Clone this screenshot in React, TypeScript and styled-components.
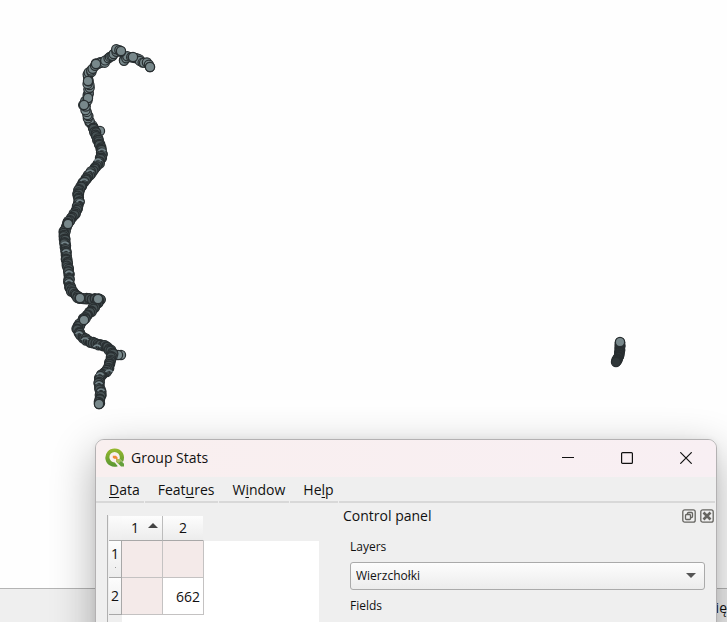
import React from 'react';
import styled, { createGlobalStyle } from 'styled-components';

const GlobalStyle = createGlobalStyle`
  * { box-sizing: border-box; }
  body { margin: 0; background: #fff; color: #111; font-family: "Open Sans", "Noto Sans", sans-serif; font-size: 14px; }
  button, select { font: inherit; color: inherit; }
`;

const Desktop = styled.main`
  position: relative;
  display: flex;
  flex-direction: column;
  height: 100vh;
  overflow: hidden;
`;

const MapCanvas = styled.section`
  flex: 1;
  min-height: 0;
  overflow: hidden;
  background: #fefefe;
  svg { display: block; }
`;

const StatusBar = styled.footer`
  display: flex;
  justify-content: flex-end;
  height: 34px;
  padding-top: 9px;
  border-top: 1px solid #b4b4b4;
  background: #efefef;
  line-height: 20px;
`;

const Dialog = styled.section`
  position: absolute;
  top: 439px;
  left: 95px;
  right: 10px;
  height: 340px;
  display: flex;
  flex-direction: column;
  overflow: hidden;
  border: 1px solid #b3b1b2;
  border-radius: 9px;
  background: #efefef;
  box-shadow: 0 14px 44px rgba(0, 0, 0, 0.32), 0 0 6px rgba(0, 0, 0, 0.06);
`;

const TitleBar = styled.header`
  display: flex;
  align-items: center;
  height: 37px;
  padding: 0 1px 1px 9px;
  background: linear-gradient(90deg, #f9efef, #f8eff3);
`;

const Title = styled.h1`
  flex: 1;
  margin: 0 0 0 6px;
  font-size: 14px;
  font-weight: 400;
  line-height: 20px;
`;

const CaptionButton = styled.button`
  display: grid;
  place-items: center;
  width: 59px;
  height: 36px;
  padding: 0;
  border: 0;
  background: none;
`;

const MenuBar = styled.nav`
  display: flex;
  gap: 1px;
  height: 26px;
  padding-right: 1px;
`;

const MenuButton = styled.button`
  padding: 1px 4px 0 13px;
  border: 0;
  border-bottom: 2px solid #d8d8d8;
  background: none;
  line-height: 20px;
  u { text-underline-offset: 2px; text-decoration-skip-ink: none; }
`;

const MenuRest = styled.div`
  flex: 1;
  border-bottom: 2px solid #d8d8d8;
`;

const Body = styled.div`
  display: flex;
  flex: 1;
  gap: 24px;
  min-height: 0;
`;

const ResultPane = styled.section`
  width: 212px;
  margin: 12px 0 0 11px;
  border-left: 1px solid #b0b0b0;
  padding-top: 1px;
  background: linear-gradient(#efefef 26px, transparent 26px), linear-gradient(90deg, #efefef 14px, #fff 14px);
`;

const Grid = styled.table`
  table-layout: fixed;
  width: 95px;
  margin-left: 1px;
  border-collapse: separate;
  border-spacing: 0;
  font-size: 14px;
`;

const CornerCell = styled.td`
  padding: 0;
  background: linear-gradient(#fcfcfc, #ededed);
  border-bottom: 1px solid #a8a8a8;
`;

const ColumnHead = styled.th`
  height: 25px;
  padding: 0;
  border-right: 1px solid #bcbcbc;
  border-bottom: 1px solid #a8a8a8;
  background: linear-gradient(#fdfdfd, #ececec);
  font-weight: 400;
  line-height: 20px;
  &:last-child { border-right-color: #efefef; }
`;

const HeadContent = styled.span<{ $sorted?: boolean }>`
  display: flex;
  align-items: center;
  justify-content: ${p => (p.$sorted ? 'flex-end' : 'center')};
  gap: 9px;
  padding-right: ${p => (p.$sorted ? '4px' : '0')};
  svg { margin-bottom: 5px; }
`;

const RowHead = styled.th`
  height: 37px;
  padding: 0;
  border-right: 1px solid #a8a8a8;
  border-bottom: 1px solid #a8a8a8;
  background: linear-gradient(#fdfdfd, #ececec);
  font-weight: 400;
  line-height: 20px;
  text-align: center;
`;

const Speck = styled.i`
  display: block;
  width: 1px;
  height: 1px;
  margin: 3px auto 6px;
  background: #999;
`;

const Cell = styled.td<{ $shaded?: boolean }>`
  padding: 0 3px 0 0;
  border-right: 1px solid #c4c2c2;
  border-bottom: 1px solid #c4c2c2;
  background: ${p => (p.$shaded ? '#f4eae9' : '#fff')};
  text-align: right;
`;

const Panel = styled.section`
  flex: 1;
  min-width: 0;
`;

const PanelHeader = styled.header`
  display: flex;
  align-items: center;
  gap: 4px;
  height: 26px;
  padding: 0 2px 0 0;
`;

const PanelTitle = styled.h2`
  flex: 1;
  margin: 0;
  font-size: 14px;
  font-weight: 400;
  line-height: 20px;
`;

const DockButton = styled.button`
  width: 14px;
  height: 14px;
  padding: 0;
  border: 0;
  background: none;
  svg { display: block; }
`;

const Form = styled.div`
  display: flex;
  flex-direction: column;
  padding: 10px 11px 0 7px;
  font-size: 12px;
  line-height: 16px;
`;

const SelectBox = styled.div`
  display: grid;
  margin: 7px 0 8px;
  > * { grid-area: 1 / 1; }
  svg { align-self: center; justify-self: end; margin: 0 9px 2px 0; pointer-events: none; }
`;

const Select = styled.select`
  appearance: none;
  width: 100%;
  height: 28px;
  padding: 0 28px 0 5px;
  border: 1px solid #aaa;
  border-radius: 3px;
  background: linear-gradient(#fdfdfd, #ececec);
`;

const FieldList = styled.div`
  height: 120px;
  margin-top: 8px;
  background: #fff;
`;

type Point = [number, number];

const track: Point[] = [
  [93, 127], [97, 137], [101, 148], [102, 155], [99, 163], [95, 168], [90, 174], [83, 183], [78, 192],
  [79, 202], [76, 212], [68, 223], [64, 233], [65, 243], [66, 253], [67, 263], [69, 272], [69, 283],
  [71, 290], [79, 298], [90, 299], [101, 299], [96, 305], [91, 311], [83, 320], [77, 328], [81, 336],
  [90, 342], [100, 345], [106, 346], [113, 353], [110, 362], [108, 370], [100, 376], [99, 385],
  [101, 393], [99, 404],
];
const upperTrack: Point[] = [
  [121, 51], [117, 50], [113, 55], [108, 59], [104, 62], [96, 64], [92, 70], [88, 75],
  [88, 81], [89, 88], [88, 98], [84, 105], [87, 112], [89, 121], [93, 127],
];
const arm: Point[] = [[124, 60], [128, 57], [133, 57], [139, 60], [142, 62], [147, 63], [150, 67]];
const spur: Point[] = [[620, 342], [620, 349], [619, 356], [616, 362]];
const strong: Point[] = [
  [121, 51], [133, 57], [150, 67], [96, 64], [88, 81], [88, 98], [84, 105],
  [68, 224], [80, 298], [98, 299], [84, 320], [99, 404], [620, 342],
];
const faint: Point[] = [
  [102, 150], [98, 160], [90, 171], [84, 180], [80, 201], [65, 243], [66, 251], [69, 272], [69, 281],
  [79, 333], [85, 339], [97, 346], [109, 371], [100, 374], [99, 383], [101, 390],
];

function walk(points: Point[], step: number, wobble = 0): Point[] {
  return points.flatMap((p, i) => {
    const next = points[i + 1];
    if (!next) return [p];
    const n = Math.max(1, Math.round(Math.hypot(next[0] - p[0], next[1] - p[1]) / step));
    return Array.from({ length: n }, (_, k): Point => [
      p[0] + ((next[0] - p[0]) * k) / n + wobble * Math.sin(i * 5 + k * 2.7),
      p[1] + ((next[1] - p[1]) * k) / n + wobble * Math.cos(i * 3 + k * 1.9),
    ]);
  });
}

function Dots({ points }: { points: Point[] }) {
  return (
    <>
      {points.map(([x, y], i) => <circle key={i} cx={x} cy={y} r="4.6" />)}
    </>
  );
}

function Features() {
  return (
    <svg width="727" height="430" viewBox="0 0 727 430" fill="#78888b" stroke="#282e30" strokeWidth="1.2" role="img" aria-label="Vertices">
      <Dots points={[[124, 60], [100, 131], [121, 355], [118, 355]]} />
      <Dots points={walk(arm, 2.2, 0.7)} />
      <Dots points={walk(upperTrack, 2.2, 0.8).reverse()} />
      <g fill="#485355"><Dots points={walk(track, 1.3, 0.8)} /></g>
      <g fill="#303739"><Dots points={walk(spur, 1, 0.4)} /></g>
      <g fill="none" stroke="#75858a" strokeWidth="1.6">
        {faint.map(([x, y]) => <path key={y} d={`M${x - 3.5} ${y + 1}q3.5-4 7 0`} />)}
      </g>
      <Dots points={strong} />
    </svg>
  );
}

function Logo() {
  return (
    <svg width="20" height="20" viewBox="0 0 20 20" aria-hidden="true">
      <defs>
        <linearGradient id="ring" x1="0" y1="0" x2="0" y2="1">
          <stop offset="0" stopColor="#98b92e" />
          <stop offset="1" stopColor="#589632" />
        </linearGradient>
      </defs>
      <path d="M9.6.4a9.2 9.2 0 1 0 3.2 17.8l-3-3.8A5.2 5.2 0 1 1 14.8 9.2c0 .6-.1 1.1-.3 1.6l3.4 3.2A9.2 9.2 0 0 0 9.6.4Z" fill="url(#ring)" />
      <path d="M11 11h3.2l4.8 4.8v2.7h-2.9L11 13.5Z" fill="#65a03c" />
      <path d="m11 11 3.2.1 1.9 1.9-2.5 2.4-2.6-2Z" fill="#a9bd58" />
      <path d="M7.8 7.8h3l1.7 1.5v3l-1.8-1.6H9.2L7.8 9.7Z" fill="#f08a35" />
    </svg>
  );
}

const cells: string[][] = [['', ''], ['', '662']];

export default function App() {
  return (
    <>
      <GlobalStyle />
      <Desktop>
        <MapCanvas><Features /></MapCanvas>
        <StatusBar>ię</StatusBar>
        <Dialog aria-labelledby="title">
          <TitleBar>
            <Logo />
            <Title id="title">Group Stats</Title>
            <CaptionButton aria-label="Minimize">
              <svg width="12" height="12"><path d="M0 5.5h12" stroke="#111" /></svg>
            </CaptionButton>
            <CaptionButton aria-label="Maximize">
              <svg width="12" height="12"><rect x=".6" y=".6" width="10.8" height="10.8" rx="1" fill="none" stroke="#111" strokeWidth="1.2" /></svg>
            </CaptionButton>
            <CaptionButton aria-label="Close">
              <svg width="12" height="12"><path d="m.3.3 11.4 11.4M11.7.3.3 11.7" stroke="#111" strokeWidth="1.2" /></svg>
            </CaptionButton>
          </TitleBar>
          <MenuBar>
            <MenuButton><u>D</u>ata</MenuButton>
            <MenuButton>Feat<u>u</u>res</MenuButton>
            <MenuButton>W<u>i</u>ndow</MenuButton>
            <MenuButton>He<u>l</u>p</MenuButton>
            <MenuRest />
          </MenuBar>
          <Body>
            <ResultPane>
              <Grid>
                <colgroup><col style={{ width: 13 }} /><col style={{ width: 41 }} /><col style={{ width: 41 }} /></colgroup>
                <thead>
                  <tr>
                    <CornerCell />
                    <ColumnHead scope="col">
                      <HeadContent $sorted>1
                        <svg width="10" height="5"><path d="M5 0 10 5H0Z" fill="#444" /></svg>
                      </HeadContent>
                    </ColumnHead>
                    <ColumnHead scope="col"><HeadContent>2</HeadContent></ColumnHead>
                  </tr>
                </thead>
                <tbody>
                  {cells.map((row, r) => (
                    <tr key={r}>
                      <RowHead scope="row">{r + 1}{r === 0 && <Speck />}</RowHead>
                      {row.map((value, c) => <Cell key={c} $shaded={!value}>{value}</Cell>)}
                    </tr>
                  ))}
                </tbody>
              </Grid>
            </ResultPane>
            <Panel>
              <PanelHeader>
                <PanelTitle>Control panel</PanelTitle>
                <DockButton aria-label="Float">
                  <svg width="14" height="14" fill="none" stroke="#666561">
                    <rect x=".8" y=".8" width="12.4" height="12.4" rx="2" strokeWidth="1.3" />
                    <rect x="5.5" y="3.5" width="5" height="5" rx="1" strokeWidth="1.3" />
                    <rect x="3.5" y="5.5" width="5" height="5" rx="1" strokeWidth="1.3" fill="#efefef" />
                  </svg>
                </DockButton>
                <DockButton aria-label="Close panel">
                  <svg width="14" height="14" fill="none" stroke="#666561">
                    <rect x=".8" y=".8" width="12.4" height="12.4" rx="2" strokeWidth="1.3" />
                    <path d="m3.5 3.5 7 7m0-7-7 7" strokeWidth="2.6" />
                  </svg>
                </DockButton>
              </PanelHeader>
              <Form>
                <label htmlFor="layers">Layers</label>
                <SelectBox>
                  <Select id="layers"><option>Wierzchołki</option></Select>
                  <svg width="10" height="5"><path d="M0 0h10L5 5Z" fill="#555" /></svg>
                </SelectBox>
                <span id="fields">Fields</span>
                <FieldList role="listbox" aria-labelledby="fields" />
              </Form>
            </Panel>
          </Body>
        </Dialog>
      </Desktop>
    </>
  );
}
